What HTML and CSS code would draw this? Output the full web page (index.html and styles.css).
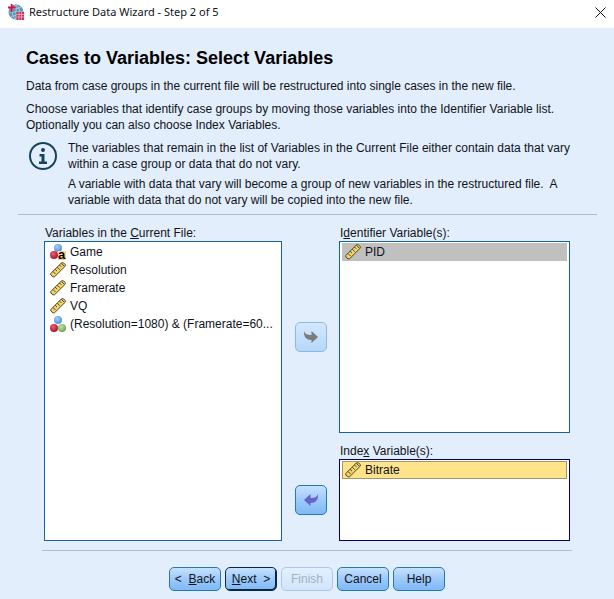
FILE: index.html
```html
<!DOCTYPE html>
<html lang="en">
<head>
<meta charset="utf-8">
<meta name="viewport" content="width=device-width, initial-scale=1">
<title>Restructure Data Wizard - Step 2 of 5</title>
<link rel="stylesheet" href="styles.css">
</head>
<body>
<svg class="sprites" aria-hidden="true">
  <defs>
    <radialGradient id="blue" cx=".4" cy=".35" r=".65"><stop offset="0" stop-color="#a5d0f6"/><stop offset="1" stop-color="#4f92d6"/></radialGradient>
    <radialGradient id="red" cx=".4" cy=".35" r=".65"><stop offset="0" stop-color="#ee5c76"/><stop offset="1" stop-color="#a91431"/></radialGradient>
    <radialGradient id="green" cx=".4" cy=".35" r=".65"><stop offset="0" stop-color="#c0e6a4"/><stop offset="1" stop-color="#66a64e"/></radialGradient>
    <symbol id="ruler" viewBox="0 0 16 16">
      <path d="M.8 11.5 11.500.8H13.500L15.200 2.500V4.200L4.500 14.800H3L.8 13z" fill="#f3d667" stroke="#3a3523" stroke-width=".9"/>
      <path d="m3 9.500 2.500 2.500M5.200 7.300l1.800 1.800M7.300 5.200l2.500 2.500M9.500 3l1.800 1.800M11.500 1.500 14 4" fill="none" stroke="#3a3523" stroke-width=".9"/>
    </symbol>
    <symbol id="nominal" viewBox="0 0 16 16">
      <circle cx="8" cy="4" r="4" fill="url(#blue)"/>
      <circle cx="4" cy="12" r="4" fill="url(#red)"/>
      <circle cx="12" cy="12" r="4" fill="url(#green)"/>
    </symbol>
    <symbol id="string" viewBox="0 0 16 16">
      <circle cx="8" cy="4" r="4" fill="url(#blue)"/>
      <circle cx="4" cy="11" r="4" fill="url(#red)"/>
      <rect x="8" y="7" width="8" height="9" fill="#f9d992"/>
      <text x="8" y="15" class="glyph">a</text>
    </symbol>
  </defs>
</svg>
<div class="window">
  <header class="titlebar">
    <svg class="app-icon" viewBox="0 0 16 16" aria-hidden="true">
      <circle cx="8" cy="8" r="7.500" fill="#5f93bd"/>
      <path d="M8 .5v15M.5 8h15M3 3c3 2 7 2 10 0M3 13c3-2 7-2 10 0M8 .5c-5 4-5 11 0 15M8 .5c5 4 5 11 0 15" fill="none" stroke="#b7d3e6" stroke-width=".8"/>
      <path d="M0 3.500h7.500M3.700 0v8" stroke="#d4143f" stroke-width="1.800"/>
      <path d="M8.500 8H16v8H8.500z" fill="#cf2c55"/>
      <path d="M8.500 10.500H16M8.500 13H16M11 8v8M13.500 8v8" stroke="#f3c6d1" stroke-width=".7"/>
    </svg>
    <span class="title">Restructure Data Wizard - Step 2 of 5</span>
    <button class="close" type="button" aria-label="Close"><svg viewBox="0 0 11 11" aria-hidden="true"><path d="m.5.5 10 10m0-10-10 10" stroke="#111" fill="none"/></svg></button>
  </header>
  <main class="content">
    <section class="intro">
      <h1>Cases to Variables: Select Variables</h1>
      <p>Data from case groups in the current file will be restructured into single cases in the new file.</p>
      <p>Choose variables that identify case groups by moving those variables into the Identifier Variable list.<br>Optionally you can also choose Index Variables.</p>
      <div class="note">
        <svg class="info" viewBox="0 0 28 28" aria-hidden="true">
          <circle cx="14" cy="14" r="13" fill="none" stroke="#15445f" stroke-width="2"/>
          <circle cx="14" cy="8" r="2" fill="#15445f"/>
          <path d="M10.500 12H15.500v7.500H18V22H10v-2.500h2.500v-5h-2z" fill="#15445f"/>
        </svg>
        <div class="note-text">
          <p>The variables that remain in the list of Variables in the Current File either contain data that vary<br>within a case group or data that do not vary.</p>
          <p>A variable with data that vary will become a group of new variables in the restructured file.&nbsp; A<br>variable with data that do not vary will be copied into the new file.</p>
        </div>
      </div>
    </section>
    <section class="picker">
      <div class="label source-label" id="source-label">Variables in the <u>C</u>urrent File:</div>
      <ul class="list source" role="listbox" tabindex="0" aria-labelledby="source-label">
        <li role="option"><svg><use href="#string"/></svg><span>Game</span></li>
        <li role="option"><svg><use href="#ruler"/></svg><span>Resolution</span></li>
        <li role="option"><svg><use href="#ruler"/></svg><span>Framerate</span></li>
        <li role="option"><svg><use href="#ruler"/></svg><span>VQ</span></li>
        <li role="option"><svg><use href="#nominal"/></svg><span>(Resolution=1080) &amp; (Framerate=60...</span></li>
      </ul>
      <button class="move to-identifier" type="button" disabled aria-label="Move to Identifier Variables">
        <svg viewBox="0 0 16 14" aria-hidden="true"><path d="M1 1c1 3 3 4 7.500 4V1L15 7l-6.500 6V10C3.500 10 .5 7 1 1z" fill="#7b7d7c"/></svg>
      </button>
      <div class="label identifier-label" id="identifier-label">I<u>d</u>entifier Variable(s):</div>
      <ul class="list identifier" role="listbox" tabindex="0" aria-labelledby="identifier-label">
        <li class="inactive" role="option"><svg><use href="#ruler"/></svg><span>PID</span></li>
      </ul>
      <button class="move from-index" type="button" aria-label="Remove from Index Variables">
        <svg viewBox="0 0 16 14" aria-hidden="true"><path d="M15 1c-1 3-3 4-7.500 4V1L1 7l6.500 6V10C12.500 10 15.500 7 15 1z" fill="#6563ce"/></svg>
      </button>
      <div class="label index-label" id="index-label">Inde<u>x</u> Variable(s):</div>
      <ul class="list index" role="listbox" tabindex="0" aria-labelledby="index-label">
        <li class="selected" role="option" aria-selected="true"><svg><use href="#ruler"/></svg><span>Bitrate</span></li>
      </ul>
    </section>
    <footer class="actions">
      <button type="button">&lt;&nbsp; <u>B</u>ack</button>
      <button class="default" type="button"><u>N</u>ext&nbsp; &gt;</button>
      <button type="button" disabled>Finish</button>
      <button type="button">Cancel</button>
      <button type="button">Help</button>
    </footer>
  </main>
</div>
</body>
</html>
```
FILE: styles.css
```css
* { box-sizing: border-box; }

body {
  margin: 0;
  color: #10131a;
  background: #e2eefb;
  font: 12px/16px "Liberation Sans", Arial, sans-serif;
}

button { font: inherit; color: inherit; padding: 0; }
h1, p, ul { margin: 0; padding: 0; }
svg { display: block; flex: none; }
.sprites { position: absolute; width: 0; height: 0; }
.glyph { font: bold 13px "Liberation Sans", Arial, sans-serif; }

.window { display: flex; flex-direction: column; min-height: 100vh; }

.titlebar {
  display: flex;
  align-items: center;
  height: 28px;
  padding: 0 8px 4px;
  gap: 5px;
  background: #fff;
  font-family: "Noto Sans", sans-serif;
  font-size: 11px;
}
.app-icon { width: 16px; height: 16px; }
.title { flex: 1; }
.close { border: 0; background: none; }
.close svg { width: 11px; height: 11px; }

.content { display: flex; flex: 1; flex-direction: column; }

.intro {
  display: flex;
  flex-direction: column;
  gap: 7px;
  margin: 0 17px 10px 18px;
  padding: 20px 0 6px 8px;
  border-bottom: 1px solid #b1bdca;
}
h1 { font-size: 18px; line-height: 20px; margin-bottom: 3px; color: #000; }
.note { display: flex; gap: 11px; padding-left: 3px; }
.info { width: 28px; height: 28px; margin-top: 2px; }
.note-text { display: flex; flex-direction: column; gap: 4px; }

.picker {
  display: grid;
  flex: 1;
  grid-template-columns: 238fr 57px 231fr;
  grid-template-rows: 16px minmax(60px, 192fr) 26px minmax(40px, 82fr);
  margin: 0 44px;
}
.label { align-self: end; padding-left: 1px; }
.source-label { grid-area: 1 / 1; }
.source { grid-area: 2 / 1 / 5 / 2; }
.to-identifier { grid-area: 2 / 2; }
.identifier-label { grid-area: 1 / 3; }
.identifier { grid-area: 2 / 3; }
.from-index { grid-area: 4 / 2; }
.index-label { grid-area: 3 / 3; }
.index { grid-area: 4 / 3; }

.list {
  min-width: 0;
  padding: 1px 2px;
  border: 1px solid #1763a6;
  background: #fff;
  list-style: none;
}
.index { border-color: #00006e; }
.list li {
  display: flex;
  align-items: center;
  gap: 4px;
  height: 18px;
  padding: 0 2px;
  border: 1px solid transparent;
  white-space: nowrap;
}
.list svg { width: 16px; height: 16px; }
.list li.inactive { background: #c0c0c0; border-color: #c0c0c0; }
.list li.selected { background: #fee38b; border-color: #a09772; }

.move {
  display: grid;
  place-items: center;
  place-self: center;
  width: 32px;
  height: 30px;
}
.move svg { width: 16px; height: 14px; }

.move, .actions button {
  border: 1px solid #2278b8;
  border-radius: 5px;
  background: linear-gradient(#c7e1fd, #9ccafa 50%, #80b9f4);
}
.move:disabled {
  border-color: #8fb8e1;
  background: linear-gradient(#d5e8fe, #b5d7fb);
}

.actions {
  display: flex;
  justify-content: center;
  gap: 4px;
  margin: 9px 42px 0;
  padding: 16px 0 8px;
  border-top: 1px solid #b1bdca;
}
.actions button { width: 52px; height: 24px; }
.actions .default { border-color: #08264a; box-shadow: inset -1px -1px #08264a; }
.actions button:disabled {
  color: #a3b2c2;
  border-color: #a9c9e6;
  background: linear-gradient(#e3f0fe, #d0e5fc);
}
```
